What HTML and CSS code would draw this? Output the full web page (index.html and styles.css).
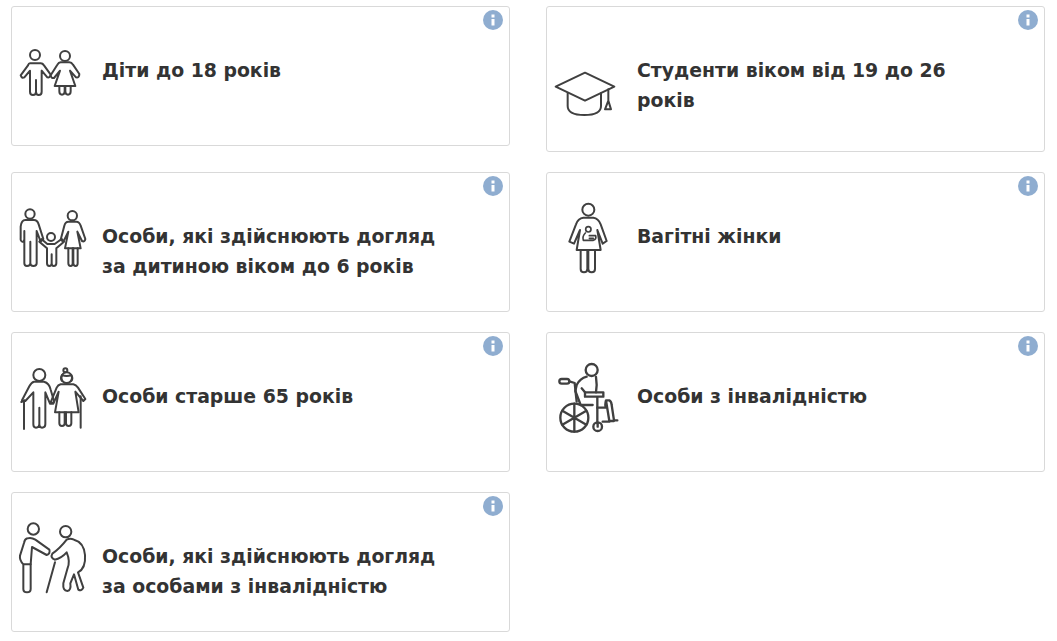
FILE: index.html
```html
<!DOCTYPE html>
<html lang="uk">
<head>
    <meta charset="UTF-8">
    <title>Категорії</title>
    <link rel="stylesheet" href="styles.css">
</head>
<body>

<div class="cards">
    <div class="card">
        <svg class="card-icon" viewBox="51 108 240 240">
            <circle cx="105" cy="165" r="15"/>
            <path d="M90 190H122Q128 190 132 196L152 224Q150 234 142 232L125 212V275Q125 285 116 285Q108 285 108 275V240V275Q108 285 99 285Q90 285 90 275V212L73 232Q65 236 62 226L84 196Q86 190 90 190Z"/>
            <circle cx="195" cy="168" r="15"/>
            <path d="M182 187H208Q215 187 219 194L238 222Q238 234 228 232L210 212L226 258H164L180 212L162 234Q154 236 152 226L172 194Q176 187 182 187Z"/>
            <path d="M178 258V274Q178 284 186 284Q194 284 194 274V258M196 258V274Q196 284 204 284Q212 284 212 274V258"/>
        </svg>
        <p class="card-text">Діти до 18 років</p>
        <svg class="info" viewBox="0 0 20 20"><circle cx="10" cy="10" r="10"/><path d="M8.500 4.500h3v3h-3zM8.500 9h3v6.500h-3z"/></svg>
    </div>

    <div class="card">
        <svg class="card-icon card-icon-low" viewBox="21 -54 240 240">
            <path d="M32 80L120 38L208 80L120 122Z"/>
            <path d="M68 100V138Q68 165 118 165Q168 165 168 138V100"/>
            <path d="M190 88V122M190 122L180 148H198Z"/>
        </svg>
        <p class="card-text">Студенти віком від 19 до 26 років</p>
        <svg class="info" viewBox="0 0 20 20"><circle cx="10" cy="10" r="10"/><path d="M8.500 4.500h3v3h-3zM8.500 9h3v6.500h-3z"/></svg>
    </div>

    <div class="card">
        <svg class="card-icon" viewBox="21 21 240 240">
            <circle cx="60" cy="57" r="14"/>
            <path d="M46 75H72Q82 75 86 88L100 132L92 140L80 108V205Q80 213 70 213Q61 213 61 205V140V205Q61 213 51 213Q43 213 43 205V108V132Q42 142 36 140Q31 138 32 130V95Q34 75 46 75Z"/>
            <circle cx="123" cy="126" r="12"/>
            <path d="M112 147H134L155 132L162 140L139 160V205Q139 213 131 213Q125 213 125 205V178V205Q125 213 118 213Q111 213 111 205V160L88 140L94 132Z"/>
            <circle cx="187" cy="62" r="14"/>
            <path d="M175 80H199Q208 80 212 92L226 132Q224 142 216 138L202 110L212 160H165L175 110L160 140L152 134L163 92Q166 80 175 80Z"/>
            <path d="M175 160V205Q175 213 182 213Q188 213 188 205V160M190 160V205Q190 213 197 213Q203 213 203 205V160"/>
        </svg>
        <p class="card-text">Особи, які здійснюють догляд за дитиною віком до 6 років</p>
        <svg class="info" viewBox="0 0 20 20"><circle cx="10" cy="10" r="10"/><path d="M8.500 4.500h3v3h-3zM8.500 9h3v6.500h-3z"/></svg>
    </div>

    <div class="card">
        <svg class="card-icon" viewBox="6 21 240 240">
            <circle cx="115" cy="44" r="18"/>
            <path d="M100 68H130Q145 70 152 88L170 138L158 146L142 105L152 165H80L90 105L72 146L58 140L78 88Q84 70 100 68Z"/>
            <path d="M92 165V222Q92 232 102 232Q112 232 112 222V165M115 165V222Q115 232 125 232Q135 232 135 222V165"/>
            <circle class="thin" cx="115" cy="103" r="8"/>
            <path class="thin" d="M106 114Q96 124 100 136H130Q140 132 137 122H118M118 130H130"/>
        </svg>
        <p class="card-text">Вагітні жінки</p>
        <svg class="info" viewBox="0 0 20 20"><circle cx="10" cy="10" r="10"/><path d="M8.500 4.500h3v3h-3zM8.500 9h3v6.500h-3z"/></svg>
    </div>

    <div class="card">
        <svg class="card-icon" viewBox="21 21 240 240">
            <circle cx="88" cy="60" r="18"/>
            <path d="M72 80H102Q118 84 122 104L132 138Q130 148 120 146L106 112V208Q106 218 96 218Q88 218 88 208V158V208Q88 218 78 218Q70 218 70 208V112L46 138L36 136L58 94Q64 82 72 80Z"/>
            <path d="M42 138V222M34 141L44 136"/>
            <circle cx="170" cy="68" r="16"/>
            <circle cx="166" cy="46" r="6"/>
            <path d="M156 78Q150 70 156 60Q170 66 184 60Q190 70 184 78"/>
            <path d="M152 88H190Q198 90 204 98L226 132L220 138L196 110L206 172H135L146 110L130 146L122 142L140 98Q144 90 152 88Z"/>
            <path d="M148 172V205Q148 213 156 213Q164 213 164 205V172M168 172V205Q168 213 176 213Q184 213 184 205V172M212 124V218"/>
        </svg>
        <p class="card-text">Особи старше 65 років</p>
        <svg class="info" viewBox="0 0 20 20"><circle cx="10" cy="10" r="10"/><path d="M8.500 4.500h3v3h-3zM8.500 9h3v6.500h-3z"/></svg>
    </div>

    <div class="card">
        <svg class="card-icon card-icon-bold" viewBox="6 21 240 240">
            <circle cx="125" cy="45" r="18"/>
            <path d="M110 65Q90 70 80 90L76 108L92 150H128M138 66Q142 90 138 112"/>
            <path d="M95 100L105 112"/>
            <rect x="28" y="72" width="30" height="14" rx="7"/>
            <path d="M58 79L74 84L80 140"/>
            <path d="M105 112H160V125H105ZM142 125V205"/>
            <path d="M142 158H168Q164 150 168 136H178Q184 138 185 150L192 196H202M168 136L178 198H192M158 200H178"/>
            <circle cx="73" cy="188" r="42"/>
            <path d="M73 146V230M37 167L109 209M37 209L109 167"/>
            <circle cx="143" cy="215" r="13"/>
            <path d="M143 205V215"/>
        </svg>
        <p class="card-text">Особи з інвалідністю</p>
        <svg class="info" viewBox="0 0 20 20"><circle cx="10" cy="10" r="10"/><path d="M8.500 4.500h3v3h-3zM8.500 9h3v6.500h-3z"/></svg>
    </div>

    <div class="card">
        <svg class="card-icon" viewBox="21 21 240 240">
            <circle cx="70" cy="42" r="17"/>
            <path d="M52 70Q64 66 76 74L118 104Q122 116 110 120L66 96L62 148V222Q62 232 51 232Q40 232 40 222V148Q28 136 30 122L42 84Q44 72 52 70Z"/>
            <path d="M42 148H62"/>
            <path d="M135 142L110 232"/>
            <circle cx="167" cy="50" r="17"/>
            <path d="M170 74Q150 100 127 116Q120 128 134 134Q154 130 170 112Q182 140 172 162L160 205Q158 228 172 228Q184 226 181 205L192 178L205 224Q214 230 220 218L204 172Q228 160 225 120Q222 82 192 74Q180 68 170 74Z"/>
        </svg>
        <p class="card-text">Особи, які здійснюють догляд за особами з інвалідністю</p>
        <svg class="info" viewBox="0 0 20 20"><circle cx="10" cy="10" r="10"/><path d="M8.500 4.500h3v3h-3zM8.500 9h3v6.500h-3z"/></svg>
    </div>
</div>

</body>
</html>
```

FILE: styles.css
```css
body {
    margin: 0;
    padding: 6px 12px 0 11px;
    background: #fff;
    font-family: 'DejaVu Sans', Verdana, sans-serif;
    color: #333;
}
.cards {
    display: grid;
    grid-template-columns: 499px 499px;
    column-gap: 36px;
    row-gap: 20px;
    align-items: start;
}
.card {
    position: relative;
    display: flex;
    align-items: flex-start;
    box-sizing: border-box;
    padding: 29px 5px;
    background: #fff;
    border: 1px solid #d9d9d9;
    border-radius: 3px;
}
.card-icon {
    flex: none;
    width: 80px;
    height: 80px;
    margin-right: 5px;
    fill: none;
    stroke: #404040;
    stroke-width: 6;
    stroke-linejoin: round;
    stroke-linecap: round;
}
.card-icon-low {
    margin-top: 6px;
}
.card-icon-bold {
    stroke-width: 7;
}
.card-icon .thin {
    stroke-width: 5;
}
.card-text {
    width: 350px;
    margin: 20px 0 0 0;
    font-size: 18.85px;
    font-weight: bold;
    line-height: 30px;
}
.info {
    position: absolute;
    top: 3px;
    right: 6px;
    width: 20px;
    height: 20px;
}
.info circle {
    fill: #8fadd0;
}
.info path {
    fill: #fff;
}
```
